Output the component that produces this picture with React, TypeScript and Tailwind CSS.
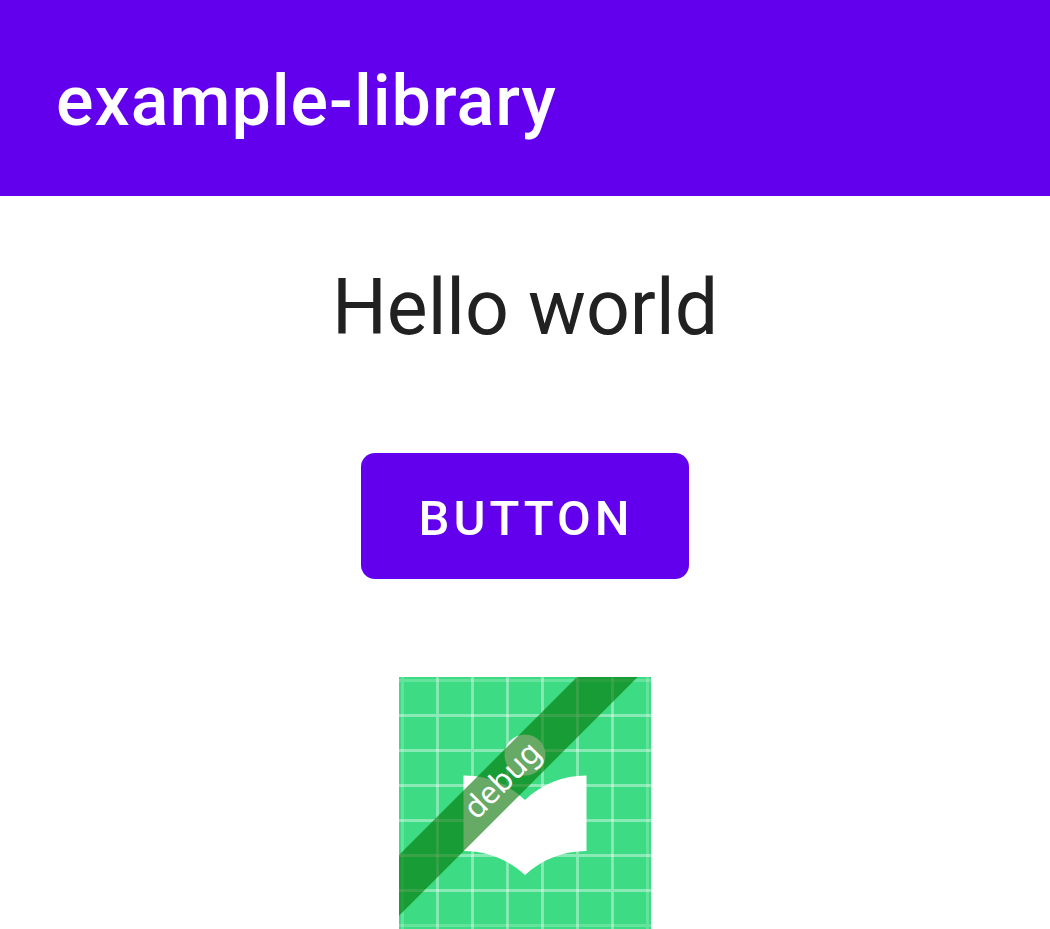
const gridLines = [11, 21, 31, 41, 51, 61];
const edgeLines = [1, 71];

function LauncherIcon() {
  return (
    <svg viewBox="0 0 252 252" className="block size-[252px]" role="img" aria-label="App icon, debug build">
      <rect width="252" height="252" fill="#3ddc84" />
      <g stroke="#ffffff" strokeWidth="2.8">
        {gridLines.map((n) => (
          <path key={n} strokeOpacity="0.4" d={`M${n * 3.5} 0V252M0 ${n * 3.5}H252`} />
        ))}
        {edgeLines.map((n) => (
          <path key={n} strokeOpacity="0.2" d={`M${n * 3.5} 0V252M0 ${n * 3.5}H252`} />
        ))}
      </g>
      <circle cx="126" cy="78" r="20.5" fill="#ffffff" />
      <path
        fill="#ffffff"
        d="M126 123C109 107 88 98.500 64.500 98.500V174C88 174 109 182.500 126 198C143 182.500 164 174 187.500 174V98.500C164 98.500 143 107 126 123Z"
      />
      <path fill="#007200" fillOpacity="0.6" d="M0 178L178 0H238.700L0 238.700Z" />
      <text
        transform="translate(104.200 104.200) rotate(-45)"
        y="9"
        textAnchor="middle"
        fill="#ffffff"
        className="font-['Noto_Sans',sans-serif] text-[31px]"
      >
        debug
      </text>
    </svg>
  );
}

export default function App() {
  return (
    <div className="min-h-screen bg-white font-[Roboto,sans-serif]">
      <header className="flex h-[196px] items-center bg-[#6200ee] px-14 pt-[6px]">
        <h1 className="text-[70px] leading-[82px] font-medium tracking-[1px] text-white">example-library</h1>
      </header>
      <main className="flex flex-col items-center pt-[67px]">
        <p className="text-[77px] leading-[90px] text-[#212121]">Hello world</p>
        <button
          type="button"
          className="mt-[100px] h-[126px] rounded-[14px] bg-[#6200ee] pt-[6px] pr-14 pl-[58px] text-[49px] leading-[58px] font-medium tracking-[4px] text-white uppercase"
        >
          Button
        </button>
        <div className="mt-[98px]">
          <LauncherIcon />
        </div>
      </main>
    </div>
  );
}
